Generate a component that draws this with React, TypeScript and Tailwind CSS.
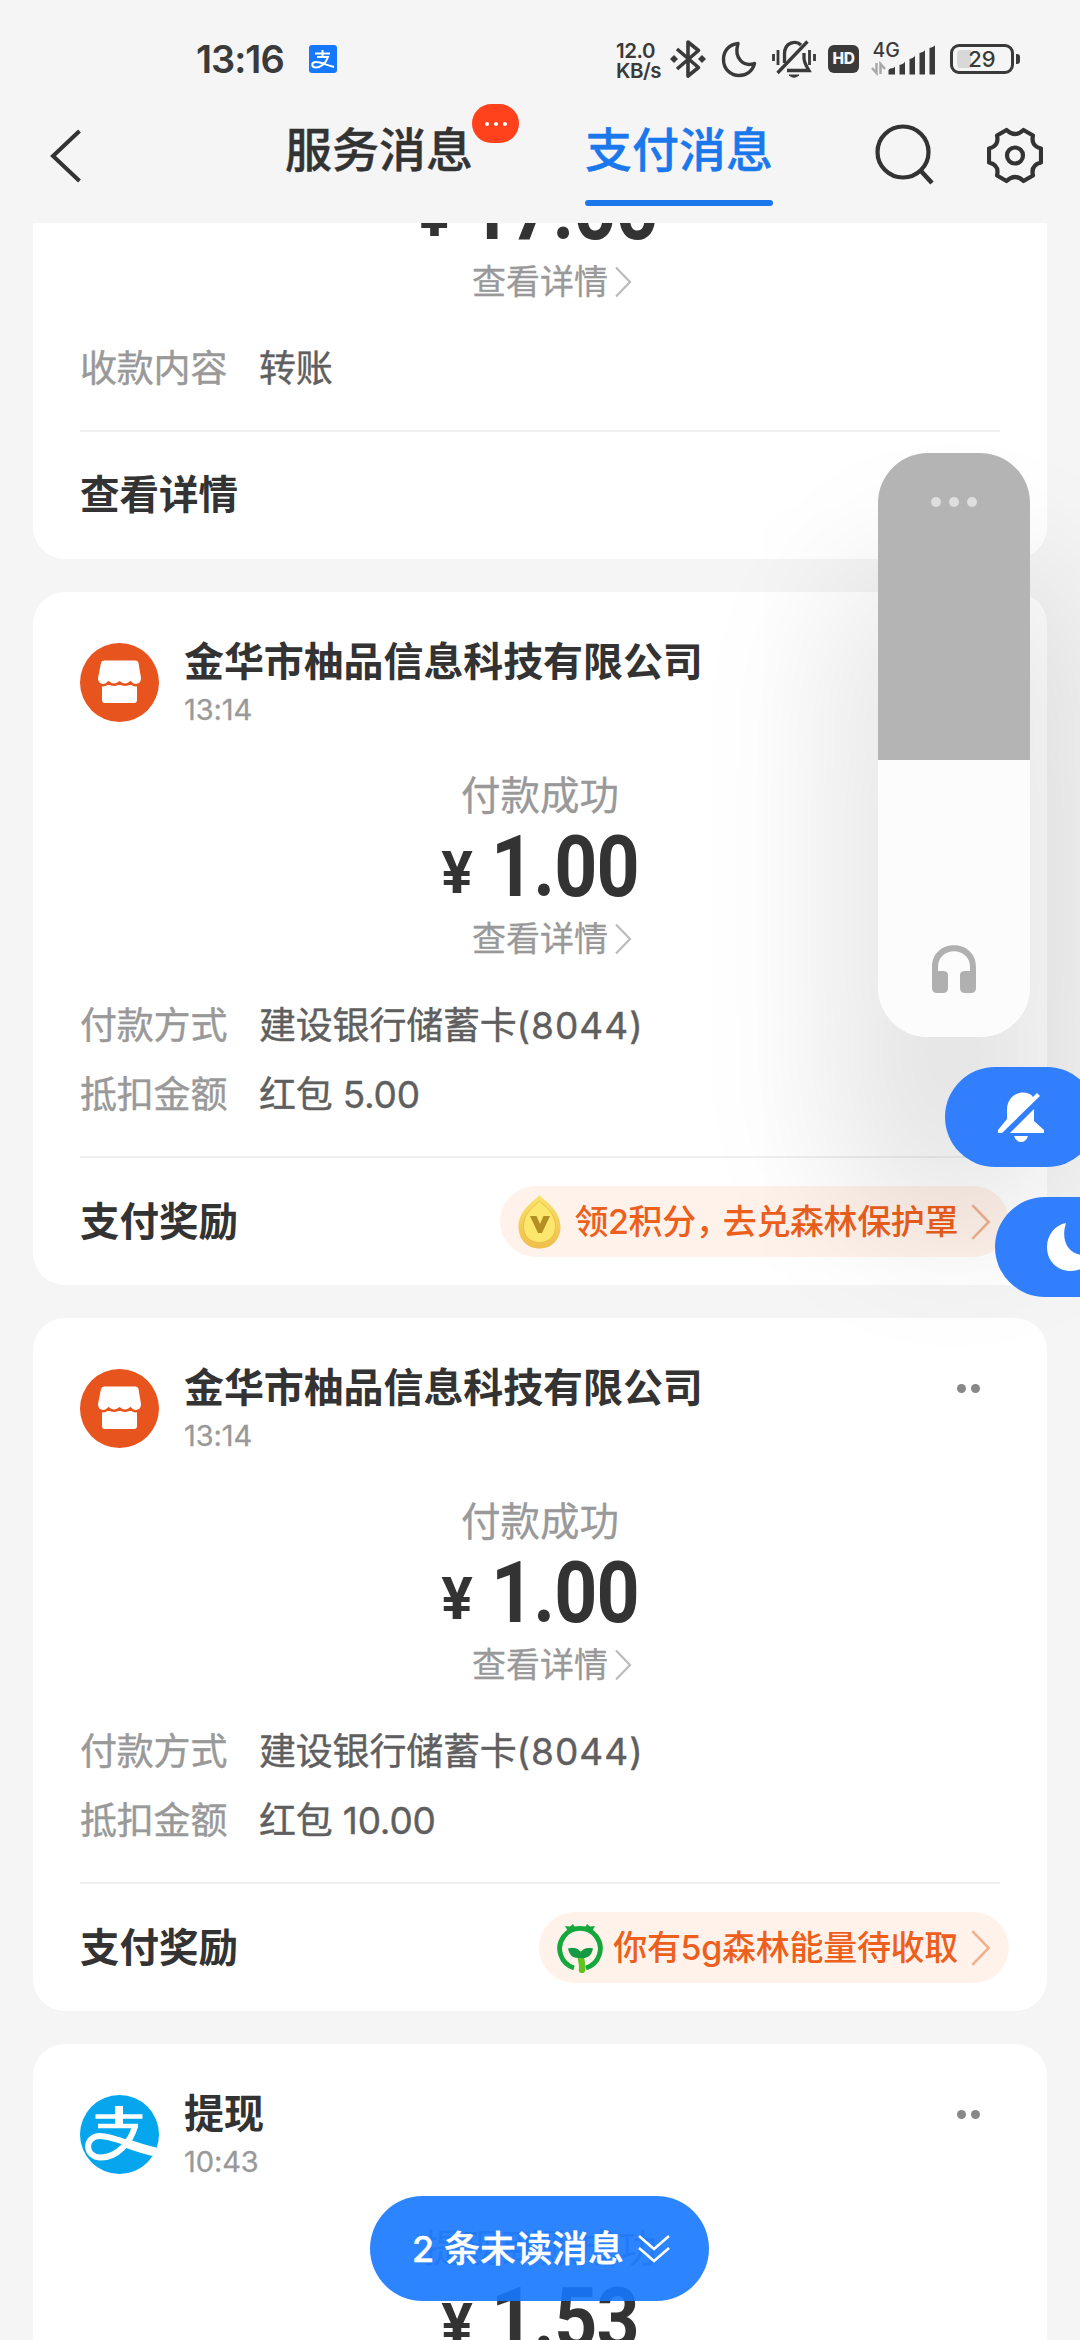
import { ReactNode } from "react";

const font = "font-['Inter','Noto_Sans_CJK_SC',sans-serif]";

function Chevron({ className }: { className: string }) {
  return (
    <svg className={className} viewBox="0 0 18 32" fill="none" stroke="currentColor" strokeWidth="2.200">
      <path d="M2 1.5L16 16L2 30.5" />
    </svg>
  );
}

function StatusBar() {
  return (
    <div className="flex h-[120px] items-start text-[#3a3a3a]">
      <div className="ml-[196px] mt-[34px] w-[94px] text-[38px] font-semibold leading-[51px] tracking-[-1px] whitespace-nowrap">13:16</div>
      <svg className="ml-[19px] mt-[45px] h-[28px] w-[28px]" viewBox="0 0 28 28">
        <rect width="28" height="28" rx="3" fill="#1677ff" />
        <g fill="none" stroke="#fff" strokeWidth="2">
          <path d="M13.500 5V11M6 8.500H21M8 12H19C17 18 12 22.500 7 22.500C2 22.500 2 17 7 17C12 17 17 20 25 22" />
        </g>
      </svg>
      <div className="ml-[279px] mt-[41px] w-[47px] text-[20.5px] font-semibold leading-[20px] tracking-[-0.5px] whitespace-nowrap">
        <div>12.0</div>
        <div>KB/s</div>
      </div>
      <svg className="ml-[7px] mt-[39px] h-[40px] w-[36px]" viewBox="0 0 36 40" fill="none" stroke="currentColor" strokeWidth="3.600">
        <path d="M7 10L28.500 28.500L18 37V3L28.500 11.500L7 30" strokeLinejoin="round" />
        <path d="M0 20L4 16L8 20L4 24ZM28 20L32 16L36 20L32 24Z" fill="currentColor" stroke="none" />
      </svg>
      <svg className="ml-[15px] mt-[41px] h-[37px] w-[36px]" viewBox="0 0 36 37" fill="none" stroke="currentColor" strokeWidth="3.400" strokeLinejoin="round">
        <path d="M17 2.500C8 3.500 2.500 10 2.500 18.500C2.500 28 9.500 34.500 18 34.500C25.500 34.500 31.500 30 33.500 22.500C23 26 12.500 18 17 2.500Z" />
      </svg>
      <svg className="ml-[15px] mt-[39px] h-[42px] w-[44px]" viewBox="0 0 44 42" fill="none" stroke="currentColor" strokeWidth="3.300">
        <path d="M12.500 24V15C12.500 3 24 1 29 6" />
        <path d="M32 14V19C32 24 35 28 37 31.500H15" />
        <path d="M5.500 34L35.500 2.500" />
        <path d="M1.500 15V22M6 11V26M37.500 11V26M42.500 15V22" strokeWidth="2.800" />
        <path d="M17 36H27Q22 40.500 17 36Z" fill="currentColor" strokeWidth="1" />
      </svg>
      <div className="ml-[12px] mt-[45px] flex h-[28px] w-[31px] items-center justify-center rounded-[6px] bg-[#3a3a3a] text-[15.5px] font-extrabold tracking-[-0.5px] text-[#f5f5f5]">HD</div>
      <svg className="ml-[12px] mt-[41px] h-[36px] w-[65px]" viewBox="0 0 65 36" fill="currentColor">
        <text x="1.500" y="15.500" fontSize="19.500" fontWeight="500">4G</text>
        <path d="M19 27.500Q24 27 24 25V33.500H17.500V29ZM28.500 24Q34 22.500 34 20V33.500H28.500ZM38.500 18Q44 16.500 44 14V33.500H38.500ZM48.500 12Q54 10.500 54 8.500V33.500H48.500ZM58.500 7Q64 5.500 64 4V33.500H58.500Z" />
        <path d="M5.500 22V32L1 27M9.500 33V23L14 28" fill="none" stroke="#a8a8a8" strokeWidth="2.500" />
      </svg>
      <div className="ml-[14px] mt-[44px] flex items-center">
        <div className="relative flex h-[30px] w-[64px] items-center justify-center rounded-[9px] border-[3px] border-[#3a3a3a] text-[22px] font-medium leading-none">
          <span className="absolute left-[3.5px] top-[3px] h-[18px] w-[14px] rounded-l-[4px] bg-[#d8d8d8]" />
          <span className="relative">29</span>
        </div>
        <div className="ml-[2px] h-[10px] w-[4px] rounded-r-[3px] bg-[#3a3a3a]" />
      </div>
    </div>
  );
}

function Header() {
  return (
    <header className="h-[223px] overflow-hidden bg-[#f5f5f5]">
      <StatusBar />
      <div className="flex h-[103px] items-start text-[#333]">
        <svg className="ml-[49px] mt-[9px] h-[54px] w-[33px]" viewBox="0 0 33 54" fill="none" stroke="currentColor" strokeWidth="4">
          <path d="M30.500 2L4 27L30.500 52" />
        </svg>
        <div className="relative ml-[203px] mt-[-2px] w-[188px] text-[47px] font-medium leading-[64px] whitespace-nowrap [-webkit-text-stroke:0.4px]">
          服务消息
          <span className="absolute left-[187px] top-[-14px] flex h-[39px] w-[47px] items-center justify-center gap-[5px] rounded-full bg-[#ff411c]">
            <i className="size-[4px] rounded-full bg-white" />
            <i className="size-[4px] rounded-full bg-white" />
            <i className="size-[4px] rounded-full bg-white" />
          </span>
        </div>
        <div className="ml-[112px] mt-[-2px] flex w-[188px] flex-col text-[47px] font-medium leading-[64px] text-[#1b78ec] whitespace-nowrap [-webkit-text-stroke:0.4px]">
          支付消息
          <span className="mt-[18px] h-[6px] w-[188px] rounded-full bg-[#1b78ec]" />
        </div>
        <svg className="ml-[102px] mt-[4px] h-[62px] w-[60px]" viewBox="0 0 60 62" fill="none" stroke="currentColor" strokeWidth="4.200">
          <circle cx="28" cy="28" r="25.500" />
          <path d="M45.500 46.500L57 59" strokeWidth="4.600" />
        </svg>
        <svg className="ml-[52px] mt-[7px] h-[57px] w-[56px]" viewBox="0 0 56 57" fill="none" stroke="currentColor" strokeWidth="4.200" strokeLinejoin="round">
          <path d="M19.500 3Q28 11 36.500 3L46 8.500Q43.500 19 54 21.500V35.500Q43.500 38 46 48.500L36.500 54Q28 46 19.500 54L10 48.500Q12.500 38 2 35.500V21.500Q12.500 19 10 8.500Z" />
          <circle cx="28" cy="28.500" r="8" />
        </svg>
      </div>
    </header>
  );
}

function ShopAvatar() {
  return (
    <svg className="size-[79px]" viewBox="0 0 79 79">
      <circle cx="39.500" cy="39.500" r="39.500" fill="#e8541e" />
      <path d="M24 17.500H55Q58 17.500 58.500 20L61 35Q61 40 57 41V57Q57 60 54 60H25Q22 60 22 57V41Q18 40 18 35L21 20Q21.500 17.500 24 17.500Z" fill="#fff" />
      <path d="M20 41.500Q25 43.500 28.500 39.500Q34 44 39.500 39.500Q45 44 50.500 39.500Q54 43.500 59 41.500" fill="none" stroke="#e8541e" strokeWidth="2.500" />
    </svg>
  );
}

function AlipayAvatar() {
  return (
    <svg className="size-[79px]" viewBox="0 0 79 79">
      <clipPath id="round">
        <circle cx="39.500" cy="39.500" r="39.500" />
      </clipPath>
      <circle cx="39.500" cy="39.500" r="39.500" fill="#05a6ee" />
      <g clipPath="url(#round)" fill="none" stroke="#fff">
        <path d="M39 11V31" strokeWidth="8" />
        <path d="M15.500 21.500H62.500M18 31H58" strokeWidth="4.500" />
        <path d="M55 31C51 47 37 62.500 21 62.500C4 62.500 4 41 20 41C34 41 54 52 78 58" strokeWidth="6" />
        <path d="M46 48C56 52 66 55 80 58" strokeWidth="9" />
      </g>
    </svg>
  );
}

function CardHead({ avatar, name, time }: { avatar: ReactNode; name: string; time: string }) {
  return (
    <div className="flex h-[79px]">
      {avatar}
      <div className="ml-[25px] mt-[-9px] flex-1 text-[40px] font-bold leading-[56px] tracking-[-0.1px] text-[#333]">
        {name}
        <div className="mt-[2px] text-[29px] font-normal leading-[36px] text-[#999] [-webkit-text-stroke:0.3px]">{time}</div>
      </div>
      <div className="mr-[20px] mt-[15px] flex gap-[5px]">
        <i className="size-[9px] rounded-full bg-[#888]" />
        <i className="size-[9px] rounded-full bg-[#888]" />
      </div>
    </div>
  );
}

function Amount({ value }: { value: string }) {
  return (
    <div className="flex h-[86px] items-baseline justify-center font-[Roboto,sans-serif] font-bold leading-[86px] text-[#333]">
      <span className="mr-[20px] -translate-y-[3px] text-[59px] tracking-[-2px]">¥</span>
      <span className="-mr-[19px] origin-left scale-x-[0.885] text-[85px] tracking-[-1px]">{value}</span>
    </div>
  );
}

function DetailLink() {
  return (
    <div className="ml-[24px] flex items-center justify-center text-[34px] leading-[48px] text-[#999] [-webkit-text-stroke:0.3px]">
      查看详情
      <Chevron className="ml-[6px] h-[32px] w-[18px] text-[#bbb]" />
    </div>
  );
}

function Row({ label, value, suffix }: { label: string; value: string; suffix?: string }) {
  return (
    <div className="flex h-[69px] items-center text-[37px] text-[#999] whitespace-nowrap [-webkit-text-stroke:0.4px]">
      <span className="w-[179px] tracking-[-0.2px]">{label}</span>
      <span className="tracking-[-0.2px] text-[#5f5f5f]">
        {value}
        {suffix && <span className="tracking-[1px]">{suffix}</span>}
      </span>
    </div>
  );
}

function Reward({ icon, text }: { icon: ReactNode; text: ReactNode }) {
  return (
    <div className="mr-[-9px] flex h-[71px] items-center rounded-full bg-[#fff2ea] pl-[18px] pr-[18px] text-[34px] font-medium text-[#ec5f1c] whitespace-nowrap">
      {icon}
      {text}
      <Chevron className="ml-[12px] h-[38px] w-[21px] text-[#f0b18f]" />
    </div>
  );
}

function CoinIcon() {
  return (
    <svg className="mr-[13px] h-[54px] w-[43px]" viewBox="0 0 43 54">
      <defs>
        <linearGradient id="coin" x1="0" y1="0" x2="0" y2="1">
          <stop offset="0" stopColor="#f8e36c" />
          <stop offset="1" stopColor="#f0bd4a" />
        </linearGradient>
      </defs>
      <path d="M21.500 0C25 5 42.500 14 42.500 32C42.500 45 33 53.500 21.500 53.500C10 53.500 0.500 45 0.500 32C0.500 14 18 5 21.500 0Z" fill="url(#coin)" />
      <path d="M21.500 6C26 11 37.500 17 37.500 31.500C37.500 41 31 47.500 21.500 47.500C12 47.500 5.500 41 5.500 31.500C5.500 17 17 11 21.500 6Z" fill="#fbe76b" stroke="#e9c04a" strokeWidth="1" />
      <path d="M12 21H18.500L22 29L25.500 21H32L24 38H20Z" fill="#b58f24" />
    </svg>
  );
}

function SproutIcon() {
  return (
    <svg className="mr-[10px] h-[50px] w-[46px]" viewBox="0 0 46 50" fill="none">
      <path d="M17 45A20.300 20.300 0 1 1 29 45" stroke="#14a83c" strokeWidth="4.800" />
      <path d="M8 3L13 3.500L16 1L19 7L12 10ZM38 3L33 3.500L30 1L27 7L34 10Z" fill="#14a83c" />
      <path d="M25 47C26 41 23.500 37 23.500 31" stroke="#5fc421" strokeWidth="6.500" strokeLinecap="round" />
      <path d="M23.500 35C14 36 12 30 11 25.500C18 24 23 26 23.500 30C25 26 30 24 36 25.500C35 31 32 36 23.500 35Z" fill="#149a44" />
    </svg>
  );
}

interface PaymentProps {
  bonus: string;
  reward: ReactNode;
}

function PaymentCard({ bonus, reward }: PaymentProps) {
  return (
    <section className="mb-[33px] h-[693px] rounded-[32px] bg-white px-[47px] pt-[51px]">
      <CardHead avatar={<ShopAvatar />} name="金华市柚品信息科技有限公司" time="13:14" />
      <div className="mt-[46px] text-center text-[39.5px] leading-[56px] text-[#999] [-webkit-text-stroke:0.3px]">付款成功</div>
      <Amount value="1.00" />
      <div className="mt-[5px]">
        <DetailLink />
      </div>
      <div className="mt-[28px] h-[165px]">
        <Row label="付款方式" value="建设银行储蓄卡" suffix="(8044)" />
        <Row label="抵扣金额" value={bonus} />
      </div>
      <div className="flex h-[129px] items-center justify-between border-t-2 border-[#f0f0f0] text-[39.5px] font-bold text-[#333]">
        <span className="pt-[2px]">支付奖励</span>
        {reward}
      </div>
    </section>
  );
}

function VolumePanel() {
  return (
    <>
      <div className="absolute left-[878px] top-[453px] flex h-[584px] w-[152px] flex-col items-center justify-between overflow-hidden rounded-[50px] bg-[#fcfcfc]">
        <div className="flex h-[307px] w-full justify-center gap-[8px] bg-[#b4b4b4] pt-[44px]">
          <i className="size-[10px] rounded-full bg-[#dedede]" />
          <i className="size-[10px] rounded-full bg-[#dedede]" />
          <i className="size-[10px] rounded-full bg-[#dedede]" />
        </div>
        <svg className="mb-[44px] h-[48px] w-[44px]" viewBox="0 0 44 48" fill="#b0b0b0">
          <path d="M0 22C0 -7 44 -7 44 22V43Q44 48 39 48H33Q28 48 28 43V30Q28 26 33 26H38V22C38 1 6 1 6 22V26H11Q16 26 16 30V43Q16 48 11 48H5Q0 48 0 43Z" />
        </svg>
      </div>
      <div className="absolute left-[945px] top-[1067px] flex h-[100px] w-[152px] items-center justify-center rounded-full bg-[#317ffd]">
        <svg className="h-[50px] w-[48px]" viewBox="0 0 48 50" fill="#fff">
          <path d="M10 27V18C10 -1 31 -3 36 5L40 1L43 4L5 41H1V38Z" />
          <path d="M37 17V29L47 38V41H13Z" />
          <path d="M17 44H31Q29 50 24 50Q19 50 17 44Z" />
        </svg>
      </div>
      <div className="absolute left-[995px] top-[1197px] flex h-[100px] w-[152px] items-center justify-center rounded-full bg-[#317ffd]">
        <svg className="h-[48px] w-[48px]" viewBox="0 0 48 48" fill="#fff">
          <path d="M19 0C8 2 0 12 0 24C0 38 10 48 24 48C35 48 44 41 47 31C26 37 12 22 19 0Z" />
        </svg>
      </div>
    </>
  );
}

export default function App() {
  return (
    <div className={`relative h-[2340px] w-[1080px] overflow-hidden bg-[#f5f5f5] ${font}`}>
      <Header />
      <main className="h-[2117px] overflow-hidden px-[33px]">
        <section className="mb-[33px] h-[336px] overflow-hidden rounded-b-[32px] bg-white px-[47px]">
          <div className="mt-[-56px] pl-[3px]">
            <Amount value="17.00" />
          </div>
          <div className="mt-[5px]">
            <DetailLink />
          </div>
          <div className="mt-[28px] h-[96px]">
            <Row label="收款内容" value="转账" />
          </div>
          <div className="flex h-[129px] items-center border-t-2 border-[#f0f0f0] text-[39.5px] font-bold text-[#333]">查看详情</div>
        </section>
        <PaymentCard
          bonus="红包 5.00"
          reward={<Reward icon={<CoinIcon />} text={<span className="tracking-[-0.4px]">领2积分<span className="tracking-[-7px]">，</span>去兑森林保护罩</span>} />}
        />
        <PaymentCard bonus="红包 10.00" reward={<Reward icon={<SproutIcon />} text={<span className="tracking-[-0.3px]">你有5g森林能量待收取</span>} />} />
        <section className="h-[693px] rounded-[32px] bg-white px-[47px] pt-[51px]">
          <CardHead avatar={<AlipayAvatar />} name="提现" time="10:43" />
          <div className="mt-[46px] text-center text-[39px] leading-[56px] text-[#999]">提现到账成功</div>
          <Amount value="1.53" />
        </section>
      </main>
      <div className="absolute left-[878px] top-[453px] h-[584px] w-[152px] rounded-[50px] shadow-[0_150px_150px_40px_rgba(0,0,0,0.11)]" />
      <VolumePanel />
      <div className="absolute left-[370px] top-[2196px] flex h-[105px] w-[339px] items-center justify-center rounded-full bg-[#1677ff]/90 pl-[3px] pt-px text-[36px] font-medium text-white whitespace-nowrap [-webkit-text-stroke:0.4px]">
        2 条未读消息
        <svg className="ml-[14px] h-[30px] w-[32px]" viewBox="0 0 32 30" fill="none" stroke="currentColor" strokeWidth="2.500">
          <path d="M1 2L16 15L31 2M1 14L16 27L31 14" />
        </svg>
      </div>
    </div>
  );
}
